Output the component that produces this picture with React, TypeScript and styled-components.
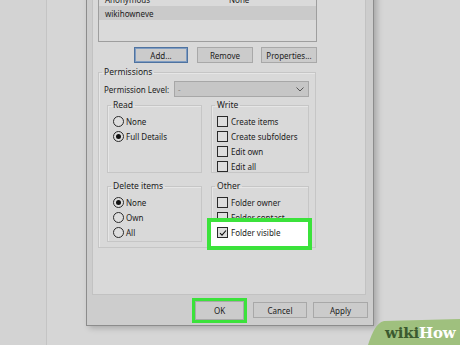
import React from 'react';
import styled, { createGlobalStyle } from 'styled-components';

const GlobalStyle = createGlobalStyle`
  html, body {
    margin: 0;
    padding: 0;
    background: #d5d5d5;
  }
  body {
    font-family: 'Noto Sans', 'Open Sans', sans-serif;
  }
`;

const Page = styled.div`
  position: relative;
  width: 460px;
  height: 345px;
  display: flex;
  overflow: hidden;
  background: #d6d6d6;
`;

const LeftStrip = styled.div`
  width: 46px;
  flex: none;
  background: #d3d3d3;
  border-right: 1px solid #c4c4c4;
`;

const Stage = styled.div`
  flex: 1;
  padding-left: 39px;
`;

const Dialog = styled.div`
  width: 286px;
  height: 354px;
  margin-top: -30px;
  display: flex;
  flex-direction: column;
  background: #cdcdcd;
  border: 1px solid #8c8c8c;
  box-shadow: 3px 2px 6px rgba(0, 0, 0, 0.22);
  font-size: 8px;
  color: #1c1c1c;
`;

const TabPanel = styled.div`
  width: 274px;
  height: 320px;
  margin: 4px 5px 0;
  padding: 5px 5px 0;
  box-sizing: border-box;
  background: #d9d9d9;
  border: 1px solid #c2c2c2;
  border-top: none;
  display: flex;
  flex-direction: column;
`;

const ListBox = styled.div`
  width: 219px;
  height: 62px;
  flex: none;
  box-sizing: border-box;
  padding-top: 11px;
  background: #dadada;
  border: 1px solid #9e9e9e;
`;

const ListRow = styled.div<{ $selected?: boolean }>`
  height: 14px;
  display: grid;
  grid-template-columns: 124px 1fr;
  align-items: center;
  padding-left: 6px;
  background: ${(p) => (p.$selected ? '#cacaca' : 'transparent')};
`;

const ButtonRow = styled.div`
  width: 219px;
  display: flex;
  justify-content: flex-end;
  gap: 8px;
  margin-top: 5px;
`;

const Button = styled.button<{ $w: number; $focused?: boolean }>`
  width: ${(p) => p.$w}px;
  height: 16px;
  padding: 0;
  font: inherit;
  color: #1c1c1c;
  background: #cbcbcb;
  border: 1px solid ${(p) => (p.$focused ? '#4f73a0' : '#a8a8a8')};
  box-shadow: ${(p) => (p.$focused ? 'inset 0 0 0 1px #7f9cc2' : 'none')};
  border-radius: 0;
`;

const Group = styled.fieldset<{ $h?: number }>`
  margin: 0;
  padding: 0 5px;
  min-width: 0;
  box-sizing: border-box;
  height: ${(p) => (p.$h ? `${p.$h}px` : 'auto')};
  border: 1px solid #c6c6c6;
  box-shadow: inset 1px 1px 0 #e6e6e6;
`;

const Legend = styled.legend`
  padding: 0 2px;
  margin-left: -2px;
  line-height: 12px;
  font-size: 8.5px;
`;

const PermissionsGroup = styled(Group)`
  width: 218px;
  margin-top: 3px;
  padding: 0 6px 0 5px;
  height: 182px;
`;

const LevelRow = styled.div`
  display: flex;
  align-items: center;
  justify-content: space-between;
  margin-top: 3px;
  height: 16px;
`;

const Select = styled.div`
  width: 135px;
  height: 16px;
  box-sizing: border-box;
  display: flex;
  align-items: center;
  justify-content: space-between;
  padding: 0 4px 0 3px;
  background: #c6c6c6;
  border: 1px solid #a7a7a7;
  color: #8a8a8a;
`;

const GroupGrid = styled.div`
  display: grid;
  grid-template-columns: 95px 98px;
  column-gap: 9px;
  row-gap: 7px;
  margin: 2px 0 0 3px;
`;

const Item = styled.div`
  height: 15px;
  display: flex;
  align-items: center;
  gap: 2px;
  white-space: nowrap;
`;

const ItemList = styled.div<{ $top: number }>`
  padding-top: ${(p) => p.$top}px;
`;

const Radio = styled.span<{ $on?: boolean }>`
  width: 9px;
  height: 9px;
  flex: none;
  border-radius: 50%;
  border: 1px solid #2a2a2a;
  background: #dedede;
  display: flex;
  align-items: center;
  justify-content: center;
  &::after {
    content: '';
    width: 5px;
    height: 5px;
    border-radius: 50%;
    background: ${(p) => (p.$on ? '#111' : 'transparent')};
  }
`;

const Check = styled.span`
  width: 9px;
  height: 9px;
  flex: none;
  margin-right: 1px;
  border: 1px solid #2a2a2a;
  background: #dedede;
  display: flex;
  align-items: center;
  justify-content: center;
`;

const HighlightRow = styled(Item)`
  position: relative;
  z-index: 1;
  margin: -7px -9px -10px -10px;
  padding: 3px 0 6px 6px;
  border: 4px solid #3be23b;
  background: #ffffff;
`;

const Footer = styled.div`
  flex: 1;
  display: flex;
  align-items: center;
  justify-content: flex-end;
  gap: 6px;
  padding-right: 5px;
`;

const OkHighlight = styled.div`
  width: 55px;
  height: 25px;
  box-sizing: border-box;
  border: 3px solid #3be23b;
  display: flex;
`;

const Logo = styled.div`
  position: absolute;
  right: 0;
  bottom: 0;
  width: 92px;
  height: 26px;
`;

const LogoText = styled.span`
  position: absolute;
  left: 17px;
  bottom: 3px;
  font-family: 'DejaVu Serif', 'Liberation Serif', serif;
  font-weight: bold;
  font-size: 15px;
  letter-spacing: -0.2px;
  color: #3b5a2f;
  b {
    color: #ffffff;
  }
`;

function CheckItem({ label, checked }: { label: string; checked?: boolean }) {
  return (
    <>
      <Check>
        {checked && (
          <svg width="8" height="8" viewBox="0 0 8 8">
            <path d="M1 4.2 L3 6.2 L7 1.5" stroke="#111" strokeWidth="1.1" fill="none" />
          </svg>
        )}
      </Check>
      {label}
    </>
  );
}

export default function App() {
  return (
    <Page>
      <GlobalStyle />
      <LeftStrip />
      <Stage>
        <Dialog>
          <TabPanel>
            <ListBox>
              <ListRow>
                <span>Anonymous</span>
                <span>None</span>
              </ListRow>
              <ListRow $selected>
                <span>wikihowneve</span>
              </ListRow>
            </ListBox>
            <ButtonRow>
              <Button $w={54} $focused style={{ marginRight: 1 }}>
                Add...
              </Button>
              <Button $w={56}>Remove</Button>
              <Button $w={56}>Properties...</Button>
            </ButtonRow>

            <PermissionsGroup>
              <Legend>Permissions</Legend>
              <LevelRow>
                <span>Permission Level:</span>
                <Select>
                  <span>-</span>
                  <svg width="8" height="5" viewBox="0 0 8 5">
                    <path d="M0.5 0.5 L4 4 L7.5 0.5" stroke="#555" strokeWidth="1" fill="none" />
                  </svg>
                </Select>
              </LevelRow>

              <GroupGrid>
                <Group $h={74}>
                  <Legend>Read</Legend>
                  <ItemList $top={3}>
                    <Item>
                      <Radio />
                      None
                    </Item>
                    <Item>
                      <Radio $on />
                      Full Details
                    </Item>
                  </ItemList>
                </Group>
                <Group $h={74}>
                  <Legend>Write</Legend>
                  <ItemList $top={3}>
                    <Item>
                      <CheckItem label="Create items" />
                    </Item>
                    <Item>
                      <CheckItem label="Create subfolders" />
                    </Item>
                    <Item>
                      <CheckItem label="Edit own" />
                    </Item>
                    <Item>
                      <CheckItem label="Edit all" />
                    </Item>
                  </ItemList>
                </Group>
                <Group $h={62}>
                  <Legend>Delete items</Legend>
                  <ItemList $top={3}>
                    <Item>
                      <Radio $on />
                      None
                    </Item>
                    <Item>
                      <Radio />
                      Own
                    </Item>
                    <Item>
                      <Radio />
                      All
                    </Item>
                  </ItemList>
                </Group>
                <Group $h={62}>
                  <Legend>Other</Legend>
                  <ItemList $top={3}>
                    <Item>
                      <CheckItem label="Folder owner" />
                    </Item>
                    <Item>
                      <CheckItem label="Folder contact" />
                    </Item>
                    <HighlightRow>
                      <CheckItem label="Folder visible" checked />
                    </HighlightRow>
                  </ItemList>
                </Group>
              </GroupGrid>
            </PermissionsGroup>
          </TabPanel>

          <Footer>
            <OkHighlight>
              <Button $w={49} style={{ height: 19 }}>
                OK
              </Button>
            </OkHighlight>
            <Button $w={54}>Cancel</Button>
            <Button $w={55}>Apply</Button>
          </Footer>
        </Dialog>
      </Stage>

      <Logo>
        <svg width="92" height="26" viewBox="0 0 92 26">
          <path d="M0 26 C4 14 8 4 16 2 L92 0 L92 26 Z" fill="#9fc07e" />
        </svg>
        <LogoText>
          wiki<b>How</b>
        </LogoText>
      </Logo>
    </Page>
  );
}
